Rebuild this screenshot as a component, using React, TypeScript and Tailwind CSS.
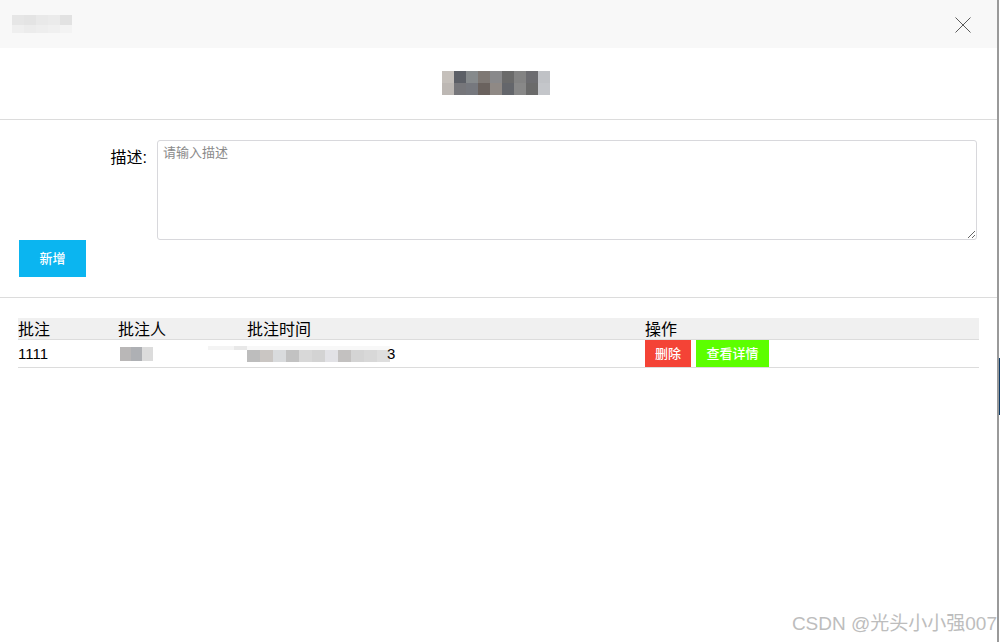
import React from 'react';

const titleBlocks = [
  ['#c5c0bb', '#5c5f66', '#868a8c', '#7e7874', '#89898b', '#6a6a6a', '#838383', '#6c6c70', '#c0c2c6'],
  ['#bdb8b4', '#76767a', '#76787e', '#6a625e', '#8f8985', '#64666b', '#888888', '#6a6a6a', '#c4c6ca'],
];

const headBlocks = ['#e6e6e6', '#e4e4e4', '#e9e9e9', '#ebebeb', '#e2e2e2'];
const nameBlocks = ['#b9b7b7', '#aeb0b4', '#dcdcdc'];
const timeBlocks = ['#f4f4f4', '#f4f4f4', '#e8e8e8', '#bdbdbd', '#cac6c3', '#d9dbdd', '#c2c2c2', '#d8d8d8', '#d3d3d3', '#e2e2e6', '#c3c1c0', '#d4d4d4', '#d8d8d8', '#dedede'];

const Mosaic = ({ colors, cell, h }: { colors: string[]; cell: string; h: string }) => (
  <div className="flex">
    {colors.map((c, i) => (
      <div key={i} className={`${cell} ${h}`} style={{ backgroundColor: c }} />
    ))}
  </div>
);

const App = () => {
  return (
    <div
      className="flex h-[642px] w-[1000px] bg-white"
      style={{ fontFamily: '"Liberation Sans", "Noto Sans CJK SC", sans-serif' }}
    >
      <div className="relative flex w-[997px] flex-col">
        {/* top bar */}
        <div className="flex h-[48px] items-center justify-between bg-[#f8f8f8] pl-[12px] pr-[26px]">
          <div className="flex flex-col">
            <Mosaic colors={headBlocks} cell="w-[12px]" h="h-[10px]" />
            <Mosaic colors={['#efefef', '#ececec', '#eeeeee', '#f0f0f0', '#f3f3f3']} cell="w-[12px]" h="h-[8px]" />
          </div>
          <svg width="16" height="16" viewBox="0 0 16 16" className="mt-[1px]">
            <path d="M0.5 0.5 L15.5 15.5 M15.5 0.5 L0.5 15.5" stroke="#5a5a5a" strokeWidth="1" fill="none" />
          </svg>
        </div>

        {/* blurred title */}
        <div className="flex h-[72px] items-center justify-center border-b border-[#dcdcdc]">
          <div className="ml-[-5px] mt-[-1px] flex flex-col">
            {titleBlocks.map((row, i) => (
              <Mosaic key={i} colors={row} cell="w-[12px]" h="h-[12px]" />
            ))}
          </div>
        </div>

        {/* form */}
        <div className="flex flex-col border-b border-[#dcdcdc] pb-[20px] pl-[19px] pr-[20px] pt-[20px]">
          <div className="flex">
            <label className="w-[138px] pr-[10px] pt-[8px] text-right text-[16px] leading-[20px] text-black">描述:</label>
            <textarea
              placeholder="请输入描述"
              className="h-[100px] flex-1 rounded-[3px] border border-[#d8d8dc] px-[5px] py-[3px] text-[13px] leading-[18px] text-black outline-none placeholder:text-[#8a8a8a]"
            />
          </div>
          <div>
            <button className="h-[37px] w-[67px] bg-[#0bb5f0] text-[13px] font-medium text-white">新增</button>
          </div>
        </div>

        {/* table */}
        <div className="px-[18px] pt-[20px] text-[16px] text-black">
          <div className="grid h-[22px] grid-cols-[100px_129px_398px_1fr] items-center border-b border-[#dcdcdc] bg-[#f0f0f0] leading-[20px]">
            <div className="pt-[2px]">批注</div>
            <div className="pt-[2px]">批注人</div>
            <div className="pt-[2px]">批注时间</div>
            <div className="pt-[2px]">操作</div>
          </div>
          <div className="grid h-[28px] grid-cols-[100px_129px_398px_1fr] items-center border-b border-[#dcdcdc]">
            <div className="text-[15px] leading-[20px]">1111</div>
            <div className="flex pl-[2px]">
              <Mosaic colors={nameBlocks} cell="w-[11px]" h="h-[14px]" />
            </div>
            <div className="ml-[-39px] flex items-center">
              <div className="flex flex-col">
                <Mosaic colors={timeBlocks.slice(0, 3).concat(['#f8f8f8', '#f8f8f8', '#f8f8f8', '#f8f8f8', '#f8f8f8', '#f8f8f8', '#f8f8f8', '#f8f8f8', '#f8f8f8', '#f8f8f8', '#f8f8f8'])} cell="w-[13px]" h="h-[4px]" />
                <Mosaic colors={['#ffffff', '#ffffff', '#ffffff'].concat(timeBlocks.slice(3))} cell="w-[13px]" h="h-[12px]" />
              </div>
              <span className="ml-[-3px] text-[15px] leading-[20px]">3</span>
            </div>
            <div className="flex h-full gap-[5px]">
              <button className="h-full w-[46px] bg-[#f44336] text-[13px] font-medium text-white">删除</button>
              <button className="h-full w-[73px] bg-[#5cff00] text-[13px] font-medium text-white">查看详情</button>
            </div>
          </div>
        </div>

        <div className="absolute bottom-[6px] right-[0px] text-[19px] leading-[24px] text-[#bdbdbd]">CSDN @光头小小强007</div>
      </div>
      <div className="w-[2px] bg-[#9a9a9a]" />
      <div className="flex w-[1px] flex-col">
        <div className="h-[358px] bg-white" />
        <div className="h-[57px] bg-[#0d3b66]" />
        <div className="flex-1 bg-white" />
      </div>
    </div>
  );
};

export default App;
